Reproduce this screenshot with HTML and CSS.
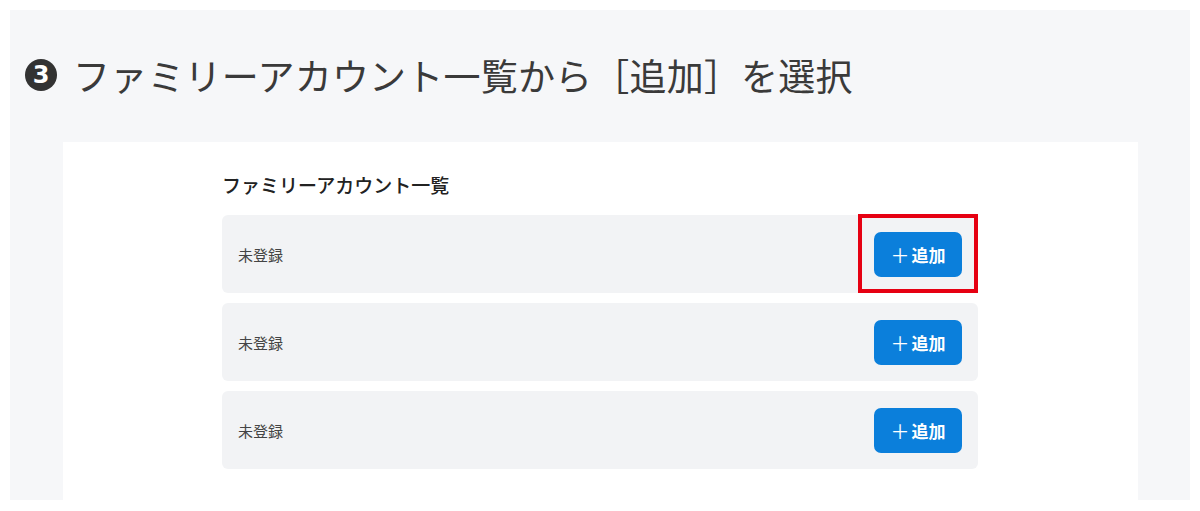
FILE: index.html
```html
<!DOCTYPE html>
<html lang="ja">
<head>
<meta charset="utf-8">
<link rel="stylesheet" href="styles.css">
</head>
<body>
<div class="page">
  <section class="panel">
    <h1 class="title"><span class="num">3</span><span class="title-text">ファミリーアカウント一覧から［追加］を選択</span></h1>
    <div class="card">
      <div class="list">
        <h2 class="list-heading">ファミリーアカウント一覧</h2>
        <div class="row">
          <span class="status">未登録</span>
          <span class="btn-wrap highlight"><button class="btn"><span class="plus">＋</span>追加</button></span>
        </div>
        <div class="row">
          <span class="status">未登録</span>
          <span class="btn-wrap"><button class="btn"><span class="plus">＋</span>追加</button></span>
        </div>
        <div class="row">
          <span class="status">未登録</span>
          <span class="btn-wrap"><button class="btn"><span class="plus">＋</span>追加</button></span>
        </div>
      </div>
    </div>
  </section>
</div>
</body>
</html>
```
FILE: styles.css
```css
* { box-sizing: border-box; }
html, body { margin: 0; padding: 0; background: #ffffff; }
body {
  font-family: "Noto Sans CJK JP", "Noto Sans", sans-serif;
  color: #333;
}
.page { padding: 10px; }
.panel {
  background: #f6f7f9;
  height: 490px;
  display: flex;
  flex-direction: column;
}
.title {
  margin: 0;
  height: 132px;
  display: flex;
  align-items: center;
  padding-left: 15px;
  padding-bottom: 2px;
  gap: 16px;
  font-weight: 400;
}
.num {
  width: 32px;
  height: 32px;
  border-radius: 50%;
  background: #333;
  color: #fff;
  font-family: "DejaVu Sans", sans-serif;
  font-weight: 700;
  font-size: 24px;
  display: flex;
  align-items: center;
  justify-content: center;
  line-height: 1;
}
.title-text {
  font-size: 37px;
  color: #3a3a3a;
  letter-spacing: 0.2px;
}
.card {
  background: #fff;
  margin: 0 52px 0 53px;
  flex: 1;
  padding: 28px 0 0 159px;
}
.list { width: 756px; display: flex; flex-direction: column; gap: 10px; }
.list-heading {
  margin: 0 0 5px 0;
  font-size: 19px;
  font-weight: 500;
  color: #222;
  line-height: 30px;
}
.row {
  background: #f2f3f5;
  border-radius: 6px;
  height: 78px;
  display: flex;
  align-items: center;
  justify-content: space-between;
  padding: 0 16px;
}
.status { font-size: 15px; color: #444; }
.btn-wrap { position: relative; display: flex; }
.btn {
  width: 88px;
  height: 45px;
  border: none;
  border-radius: 7px;
  background: #0b7fdb;
  color: #fff;
  font-family: "Noto Sans CJK JP", sans-serif;
  font-size: 17px;
  font-weight: 700;
  padding: 0;
  margin-top: 1px;
  display: flex;
  align-items: center;
  justify-content: center;
}
.plus { font-weight: 400; font-size: 19px; margin-right: 2px; }
.highlight::after {
  content: "";
  position: absolute;
  top: -17px;
  bottom: -16px;
  left: -16px;
  right: -16px;
  border: 4px solid #e60012;
}
```
